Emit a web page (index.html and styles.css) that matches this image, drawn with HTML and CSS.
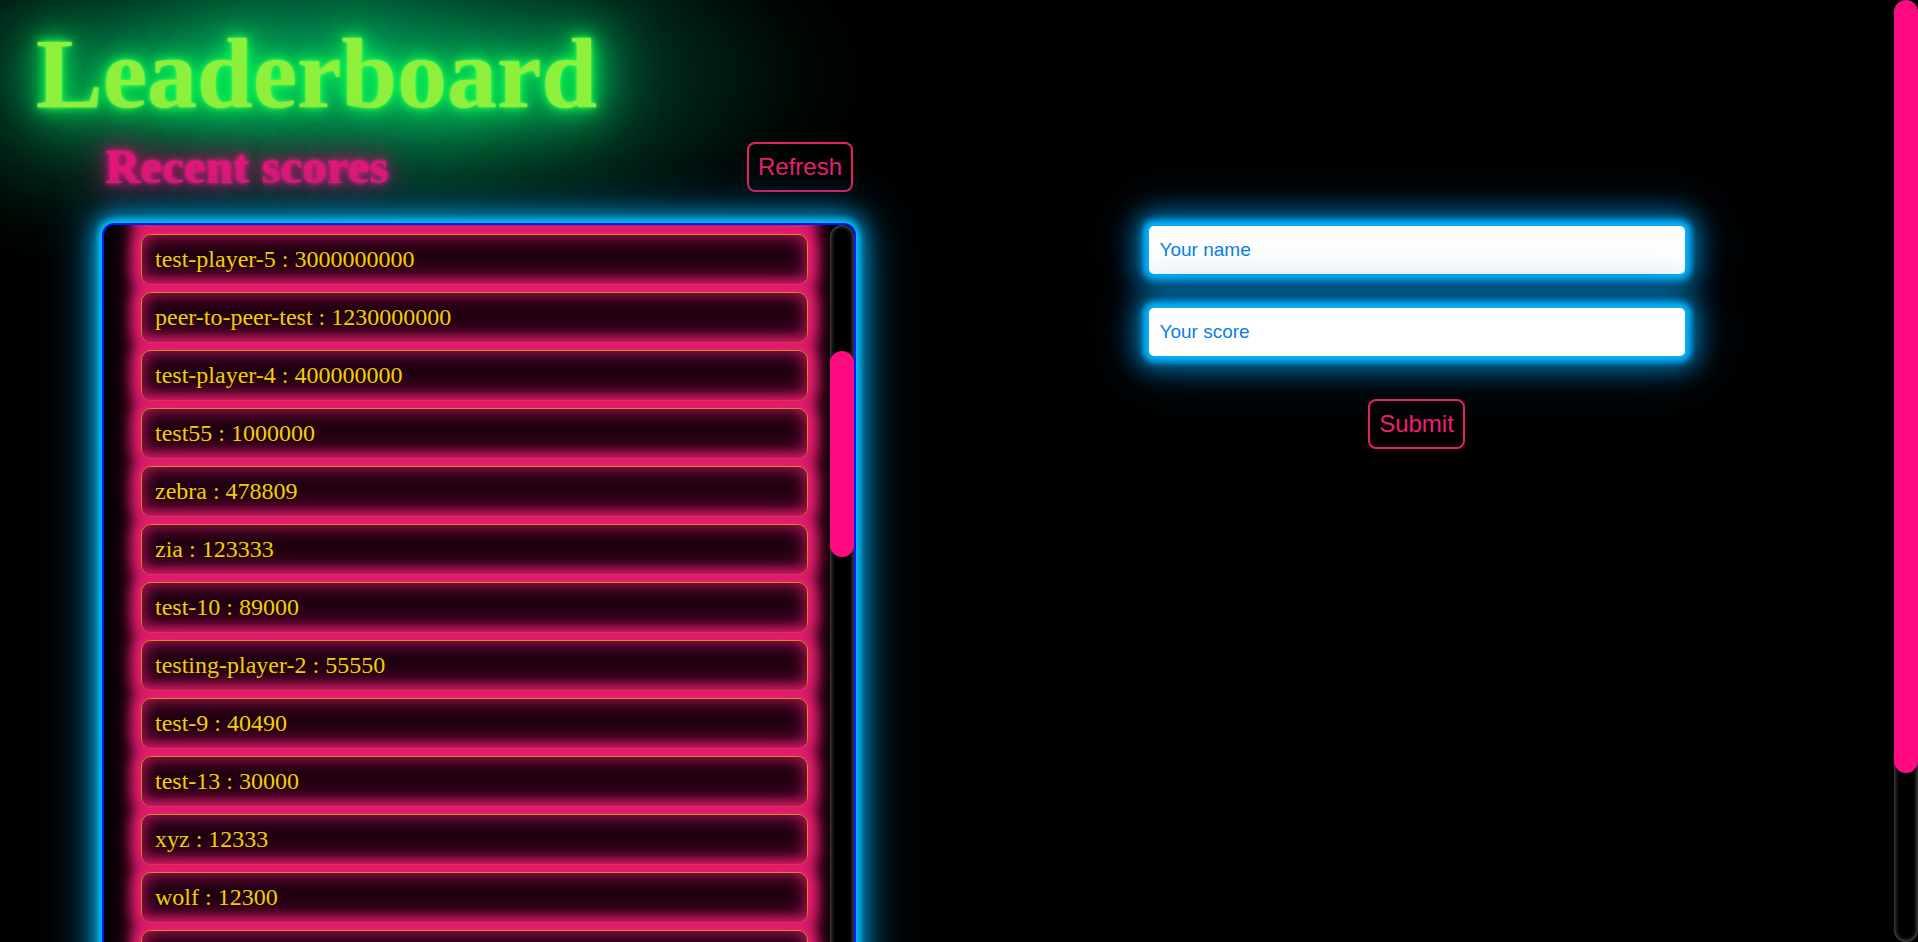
FILE: index.html
```
<!DOCTYPE html>
<html lang="en">
<head>
<meta charset="utf-8">
<title>Leaderboard</title>
<link rel="stylesheet" href="styles.css">
</head>
<body>
<div class="page">
  <h1 class="title">Leaderboard</h1>
  <div class="columns">
    <section class="board">
      <div class="board-head">
        <h2 class="subtitle">Recent scores</h2>
        <button class="neon-btn" type="button">Refresh</button>
      </div>
      <div class="scores">
        <ul class="scores-view" id="scores">
          <li class="score">hacker-man : 99999999999999</li>
          <li class="score">test-player-9 : 9000000000000</li>
          <li class="score">max-power : 100000000000</li>
          <li class="score">test-player-8 : 50000000000</li>
          <li class="score">cheat-code : 10000000000</li>
          <li class="score">test-player-7 : 8000000000</li>
          <li class="score">big-score : 5000000000</li>
          <li class="score">test-player-6 : 4500000000</li>
          <li class="score">tester-99 : 3500000000</li>
          <li class="score" id="anchor">test-player-5 : 3000000000</li>
          <li class="score">peer-to-peer-test : 1230000000</li>
          <li class="score">test-player-4 : 400000000</li>
          <li class="score">test55 : 1000000</li>
          <li class="score">zebra : 478809</li>
          <li class="score">zia : 123333</li>
          <li class="score">test-10 : 89000</li>
          <li class="score">testing-player-2 : 55550</li>
          <li class="score">test-9 : 40490</li>
          <li class="score">test-13 : 30000</li>
          <li class="score">xyz : 12333</li>
          <li class="score">wolf : 12300</li>
          <li class="score">test-8 : 12000</li>
          <li class="score">player-one : 10000</li>
          <li class="score">test-7 : 9800</li>
          <li class="score">lion : 9000</li>
          <li class="score">test-12 : 8750</li>
          <li class="score">fox : 8000</li>
          <li class="score">test-6 : 7500</li>
          <li class="score">testing-player-1 : 7000</li>
          <li class="score">test-11 : 6600</li>
          <li class="score">abc : 6000</li>
          <li class="score">test-5 : 5500</li>
          <li class="score">tiger : 5000</li>
          <li class="score">test-4 : 4500</li>
          <li class="score">bear : 4000</li>
          <li class="score">test-3 : 3500</li>
          <li class="score">eagle : 3000</li>
          <li class="score">test-2 : 2500</li>
          <li class="score">hawk : 2000</li>
          <li class="score">test-1 : 1800</li>
        </ul>
        <div class="scores-track"><div class="scores-thumb"></div></div>
      </div>
    </section>
    <section class="entry">
      <form class="entry-form">
        <input class="neon-input" type="text" placeholder="Your name">
        <input class="neon-input" type="text" placeholder="Your score">
        <button class="neon-btn" type="button">Submit</button>
      </form>
    </section>
  </div>
</div>
<div class="page-track"><div class="page-thumb"></div></div>
<script src="script.js"></script>
</body>
</html>
```
FILE: styles.css
```
html {
  background: #000;
}

body {
  margin: 0;
  display: flex;
  align-items: flex-start;
}

.page {
  flex: 1;
  min-width: 0;
  padding: 0 8px;
}

.page-track {
  position: sticky;
  top: 0;
  flex: 0 0 24px;
  height: 100vh;
  border-radius: 12px;
  box-shadow: inset 0 0 5px grey;
  overflow: hidden;
}

.page-thumb {
  height: 773px;
  background: #ff0a80;
  border-radius: 12px;
}

.title {
  position: relative;
  z-index: -1;
  margin: 19px 0 0;
  padding-left: 28px;
  font-family: "Liberation Serif", "Times New Roman", serif;
  font-weight: bold;
  font-size: 100px;
  line-height: 110px;
  color: #8ff03c;
  text-shadow: 0 0 3px #6f6, 0 0 10px #2f4, 0 0 22px #0f5, 0 0 45px #0e6,
    0 0 70px #0d7, 0 0 100px #0c7;
}

.title::before {
  content: "";
  position: absolute;
  z-index: -1;
  left: -230px;
  top: -170px;
  width: 1100px;
  height: 450px;
  pointer-events: none;
  background: radial-gradient(ellipse 50% 50% at 50% 50%,
    rgba(0, 112, 72, 1) 0%,
    rgba(0, 100, 66, 0.88) 30%,
    rgba(0, 72, 50, 0.55) 60%,
    rgba(0, 40, 30, 0.2) 85%,
    rgba(0, 0, 0, 0) 100%);
}

.columns {
  display: grid;
  grid-template-columns: 1fr 1fr;
  margin-top: 11px;
  padding-bottom: 25px;
}

.board {
  display: flex;
  flex-direction: column;
  align-items: flex-start;
  padding-left: 94px;
}

.board-head {
  box-sizing: border-box;
  width: 754px;
  padding: 0 3px 0 3px;
  display: flex;
  justify-content: space-between;
  align-items: center;
}

.subtitle {
  margin: 0;
  font-family: "Liberation Serif", "Times New Roman", serif;
  font-weight: bold;
  font-size: 49px;
  line-height: 54px;
  color: #e6157a;
  text-shadow: 0 0 4px #ff2090, 0 0 12px #f0107a, 0 0 30px #d01070, 0 0 60px #a01058;
}

.neon-btn {
  font-family: "Liberation Sans", Arial, sans-serif;
  font-size: 24px;
  line-height: 28px;
  color: #f01d72;
  background: transparent;
  border: 2px solid #e81e68;
  border-radius: 8px;
  padding: 9px 9px;
  cursor: pointer;
}

.scores {
  box-sizing: border-box;
  width: 754px;
  height: 900px;
  margin-top: 29px;
  display: flex;
  overflow: hidden;
  background: #000;
  border: 2px solid #0a14ff;
  border-radius: 12px;
  box-shadow: 0 0 6px 3px #00c8ff, 0 0 22px 6px #00a8e8, 0 0 50px 10px #005a84;
}

.scores-view {
  flex: 1;
  min-width: 0;
  margin: 0;
  padding: 7px 0 0;
  list-style: none;
  overflow: hidden;
}

.scores-track {
  flex: 0 0 24px;
  border-radius: 12px;
  background: #000;
  box-shadow: inset 0 0 5px grey;
}

.scores-thumb {
  margin-top: 126px;
  height: 206px;
  background: #ff0a80;
  border-radius: 12px;
}

.score {
  margin: 0 22px 7px 37px;
  padding: 11px 13px;
  border: 1px solid #d88a1c;
  border-radius: 10px;
  background: #1e0010;
  box-shadow: inset 0 0 18px #d01a68, 0 0 12px 9px #e91e70, 0 0 30px 6px #b0145a;
  font-family: "Liberation Serif", "Times New Roman", serif;
  font-size: 24px;
  color: #f2cf00;
}

.entry {
  display: flex;
  justify-content: center;
}

.entry-form {
  display: flex;
  flex-direction: column;
  align-items: center;
  padding-top: 84px;
}

.neon-input {
  box-sizing: border-box;
  width: 540px;
  height: 52px;
  margin: 0 0 30px;
  padding: 0 11px;
  border: 2px solid #0aa8f5;
  border-radius: 7px;
  background: #fff;
  font-family: "Liberation Sans", Arial, sans-serif;
  font-size: 19px;
  color: #0a7fe0;
  outline: none;
  box-shadow: 0 0 6px 4px #00b4ff, 0 0 24px 10px rgba(0, 150, 220, 0.75),
    0 0 50px 14px rgba(0, 110, 180, 0.35);
}

.neon-input::placeholder {
  color: #0a80e4;
  opacity: 1;
}

.entry-form .neon-btn {
  margin-top: 11px;
}
```
FILE: script.js
```
(function () {
  var list = document.getElementById('scores');
  var anchor = document.getElementById('anchor');
  list.scrollTop = 0;
  var offset = anchor.getBoundingClientRect().top - list.getBoundingClientRect().top - 9;
  list.scrollTop = offset;
})();
```
